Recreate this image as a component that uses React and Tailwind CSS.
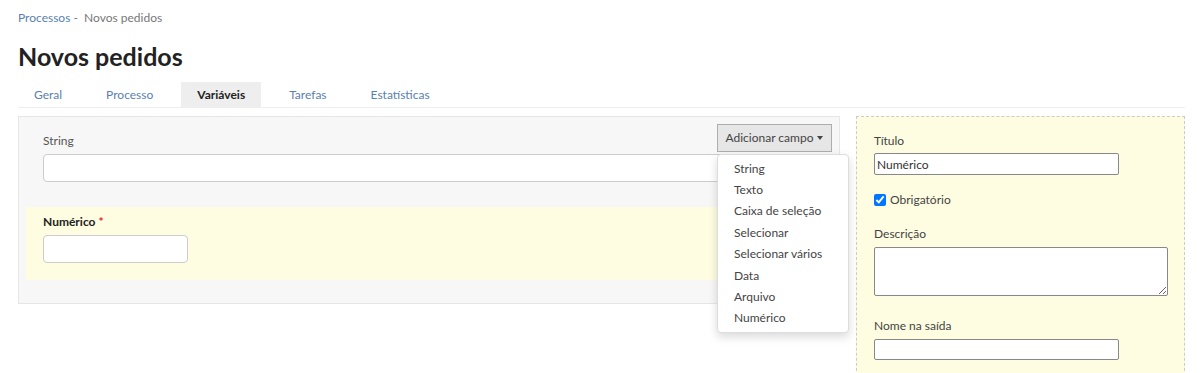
import { useState } from 'react'

const tabs = ['Geral', 'Processo', 'Variáveis', 'Tarefas', 'Estatísticas']
const fieldTypes = ['String', 'Texto', 'Caixa de seleção', 'Selecionar', 'Selecionar vários', 'Data', 'Arquivo', 'Numérico']

function Tabs({ active }) {
  return (
    <div className="flex gap-[12px] border-b border-[#eeeeee] mt-[11px]">
      {tabs.map((t) => (
        <div
          key={t}
          className={`h-[25px] px-[16px] flex items-center text-[12px] ${
            t === active ? 'bg-[#eeeeee] font-bold text-[#222]' : 'text-[#5a7fae]'
          }`}
        >
          {t}
        </div>
      ))}
    </div>
  )
}

function AddFieldMenu() {
  return (
    <div className="absolute right-[7px] top-[7px]">
      <button
        type="button"
        className="h-[28px] w-[115px] flex items-center justify-center gap-[4px] bg-[#e6e6e6] border border-[#adadad] text-[12px] text-[#444]"
      >
        Adicionar campo
        <span className="w-0 h-0 border-l-[3.5px] border-r-[3.5px] border-t-[4px] border-l-transparent border-r-transparent border-t-[#444]" />
      </button>
      <ul className="absolute left-0 top-[30px] w-[132px] bg-white border border-[#dddddd] rounded-[4px] shadow-[0_4px_10px_rgba(0,0,0,0.15)] py-[3px] z-10">
        {fieldTypes.map((f) => (
          <li key={f} className="h-[21.4px] flex items-center pl-[16px] text-[12px] text-[#444]">
            {f}
          </li>
        ))}
      </ul>
    </div>
  )
}

export default function App() {
  const [active] = useState('Variáveis')
  return (
    <div className="w-[1200px] h-[373px] overflow-hidden bg-white pl-[18px] pr-[15px] font-['Lato',sans-serif]">
      <div className="pt-[9px] text-[12px] text-[#777]">
        <span className="text-[#5a7fae]">Processos</span> -&nbsp; Novos pedidos
      </div>
      <h1 className="mt-[14px] text-[25px] leading-[30px] font-bold text-[#222]">Novos pedidos</h1>
      <Tabs active={active} />

      <div className="flex gap-[16px] mt-[8px]">
        <div className="relative w-[822px] h-[188px] shrink-0 bg-[#f7f7f7] border border-[#e6e6e6] px-[7px] pt-[16px]">
          <div className="px-[17px]">
            <label className="block text-[12px] text-[#555] leading-[16px]">String</label>
            <div className="mt-[5px] h-[28px] w-[772px] bg-white border border-[#cccccc] rounded-[4px]" />
          </div>
          <div className="mt-[25px] bg-[#fefde1] h-[73px] px-[17px] pt-[7px]">
            <label className="block text-[12px] font-bold text-[#222] leading-[16px]">
              Numérico <span className="text-[#e02020]">*</span>
            </label>
            <div className="mt-[5px] h-[28px] w-[145px] bg-white border border-[#cccccc] rounded-[4px]" />
          </div>
          <AddFieldMenu />
        </div>

        <div className="flex-1 h-[270px] bg-[#fefde1] border border-dashed border-[#cccccc] pl-[17px] pt-[16px] text-[12px] text-[#444]">
          <label className="block leading-[16px]">Título</label>
          <input
            readOnly
            value="Numérico"
            className="mt-[4px] block w-[245px] h-[22px] bg-white border border-[#888] rounded-[2px] px-[2px] text-[12px] text-[#333] outline-none"
          />
          <label className="mt-[17px] flex items-center gap-[4px] leading-[16px]">
            <input type="checkbox" defaultChecked className="w-[12px] h-[12px] m-0 accent-[#0075ff]" />
            Obrigatório
          </label>
          <label className="mt-[18px] block leading-[16px]">Descrição</label>
          <textarea
            readOnly
            className="mt-[5px] block w-[294px] h-[49px] bg-white border border-[#888] rounded-[2px] outline-none"
          />
          <label className="mt-[22px] block leading-[16px]">Nome na saída</label>
          <input
            readOnly
            className="mt-[5px] block w-[245px] h-[21px] bg-white border border-[#888] rounded-[2px] outline-none"
          />
        </div>
      </div>
    </div>
  )
}
